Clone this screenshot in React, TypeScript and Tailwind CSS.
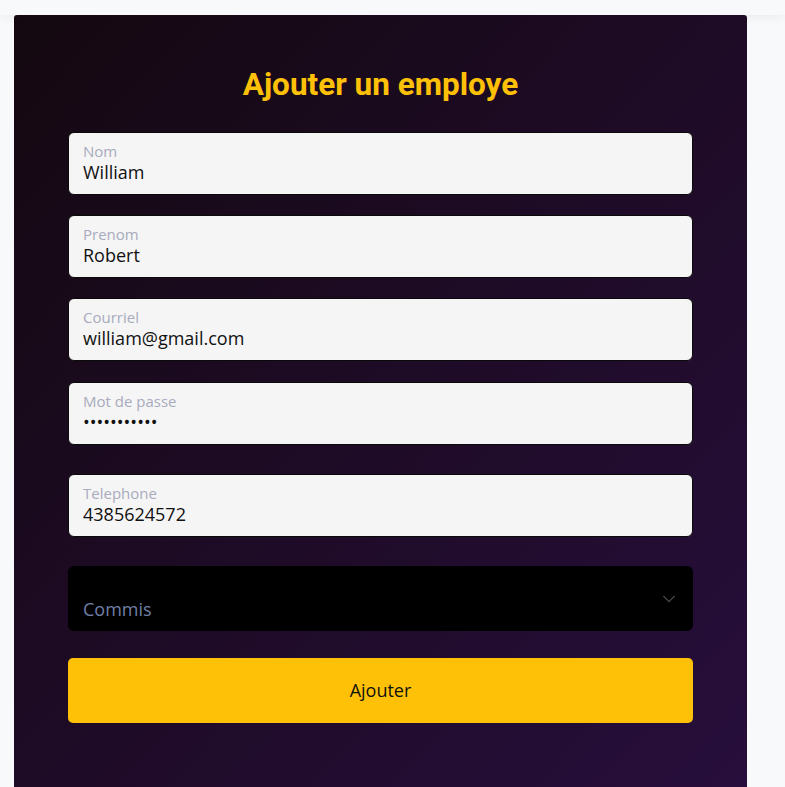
import React, { useState } from "react";

const font = { fontFamily: '"Open Sans", "Liberation Sans", sans-serif' };

function Field({
  label,
  value,
  type = "text",
  className = "",
}: {
  label: string;
  value: string;
  type?: string;
  className?: string;
}) {
  const [v, setV] = useState(value);
  return (
    <label
      className={`flex h-[63px] flex-col rounded-[6px] border border-[#0a0a0a] bg-[#f5f5f5] px-[14px] pt-[8px] ${className}`}
    >
      <span className="text-[15px] leading-[20px] text-[#a8abbd]">{label}</span>
      <input
        type={type}
        value={v}
        onChange={(e) => setV(e.target.value)}
        className="h-[23px] bg-transparent text-[18px] leading-[23px] text-[#111] outline-none"
        style={font}
      />
    </label>
  );
}

export default function App() {
  return (
    <div className="min-h-screen bg-[#f8f9fb]" style={font}>
      <div className="h-[15px] bg-[#f8f9fb] shadow-[0_2px_12px_rgba(0,0,0,0.06)]" />
      <div className="relative z-10 ml-[14px] h-[772px] w-[733px] rounded-t-[3px] bg-gradient-to-br from-[#140810] via-[#1e0b26] to-[#270e3c] px-[54px] pt-[52px]">
        <h1
          className="text-center text-[31.5px] font-bold leading-[36px] text-[#ffc107]"
          style={{ fontFamily: 'Roboto, "Liberation Sans", sans-serif' }}
        >
          Ajouter un employe
        </h1>
        <form className="mt-[29px] flex flex-col" onSubmit={(e) => e.preventDefault()}>
          <Field label="Nom" value="William" />
          <Field label="Prenom" value="Robert" className="mt-[20px]" />
          <Field label="Courriel" value="william@gmail.com" className="mt-[20px]" />
          <Field label="Mot de passe" value="motdepasse1" type="password" className="mt-[21px]" />
          <Field label="Telephone" value="4385624572" className="mt-[29px]" />

          <div className="mt-[29px] flex h-[65px] items-center justify-between rounded-[6px] bg-black pl-[15px] pr-[17px]">
            <span className="mt-[21px] text-[18px] leading-[24px] text-[#6f7fa6]">Commis</span>
            <svg width="14" height="14" viewBox="0 0 16 16" fill="none" stroke="#4a4a4a" strokeWidth="1.6" strokeLinecap="round" strokeLinejoin="round">
              <path d="M2 5l6 6 6-6" />
            </svg>
          </div>

          <button
            type="submit"
            className="mt-[27px] h-[65px] rounded-[5px] bg-[#ffc107] text-[18px] text-[#111]"
            style={font}
          >
            Ajouter
          </button>
        </form>
      </div>
    </div>
  );
}
